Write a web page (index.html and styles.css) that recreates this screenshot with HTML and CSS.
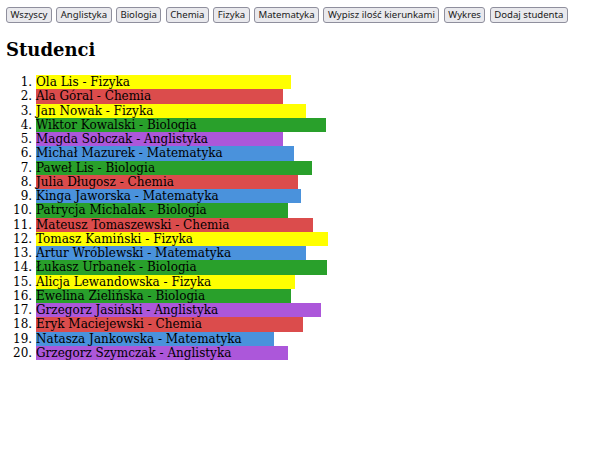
FILE: index.html
```html
<!DOCTYPE html>
<html lang="pl">
<head>
<meta charset="utf-8">
<title>Studenci</title>
<link rel="stylesheet" href="styles.css">
</head>
<body>
<div class="toolbar">
  <button class="btn">Wszyscy</button>
  <button class="btn">Anglistyka</button>
  <button class="btn">Biologia</button>
  <button class="btn">Chemia</button>
  <button class="btn">Fizyka</button>
  <button class="btn">Matematyka</button>
  <button class="btn">Wypisz ilość kierunkami</button>
  <button class="btn">Wykres</button>
  <button class="btn">Dodaj studenta</button>
</div>
<h2 class="title">Studenci</h2>
<ol class="students">
  <li class="student fiz" style="width:255px">Ola Lis - Fizyka</li>
  <li class="student che" style="width:247px">Ala Góral - Chemia</li>
  <li class="student fiz" style="width:270px">Jan Nowak - Fizyka</li>
  <li class="student bio" style="width:290px">Wiktor Kowalski - Biologia</li>
  <li class="student ang" style="width:247px">Magda Sobczak - Anglistyka</li>
  <li class="student mat" style="width:258px">Michał Mazurek - Matematyka</li>
  <li class="student bio" style="width:276px">Paweł Lis - Biologia</li>
  <li class="student che" style="width:262px">Julia Długosz - Chemia</li>
  <li class="student mat" style="width:265px">Kinga Jaworska - Matematyka</li>
  <li class="student bio" style="width:252px">Patrycja Michalak - Biologia</li>
  <li class="student che" style="width:277px">Mateusz Tomaszewski - Chemia</li>
  <li class="student fiz" style="width:292px">Tomasz Kamiński - Fizyka</li>
  <li class="student mat" style="width:270px">Artur Wróblewski - Matematyka</li>
  <li class="student bio" style="width:291px">Łukasz Urbanek - Biologia</li>
  <li class="student fiz" style="width:259px">Alicja Lewandowska - Fizyka</li>
  <li class="student bio" style="width:255px">Ewelina Zielińska - Biologia</li>
  <li class="student ang" style="width:285px">Grzegorz Jasiński - Anglistyka</li>
  <li class="student che" style="width:267px">Eryk Maciejewski - Chemia</li>
  <li class="student mat" style="width:238px">Natasza Jankowska - Matematyka</li>
  <li class="student ang" style="width:252px">Grzegorz Szymczak - Anglistyka</li>
</ol>
</body>
</html>
```
FILE: styles.css
```css
html, body {
  background: #ffffff;
}
body {
  margin: 6px;
  font-family: "DejaVu Serif", serif;
  font-size: 12px;
  line-height: 14.25px;
  color: #000;
}
.toolbar {
  display: flex;
  gap: 4.3px;
  padding-top: 1px;
}
.btn {
  flex: none;
  white-space: nowrap;
  font-family: "Noto Sans", sans-serif;
  font-size: 9.6px;
  line-height: 12px;
  height: 16px;
  padding: 1px 3.5px;
  margin: 0;
  background: #e9e9ed;
  border: 1px solid #8f8f9d;
  border-radius: 3px;
  color: #1a1a1a;
}
.title {
  font-size: 18px;
  line-height: 21px;
  font-weight: bold;
  margin: 16px 0 15px;
}
.students {
  margin: 15px 0 0;
  padding-left: 30px;
}
.student {
  height: 14.25px;
}
.fiz { background: #ffff00; }
.che { background: #db4c4c; }
.bio { background: #29a02b; }
.ang { background: #ac57da; }
.mat { background: #4a92dc; }
```
